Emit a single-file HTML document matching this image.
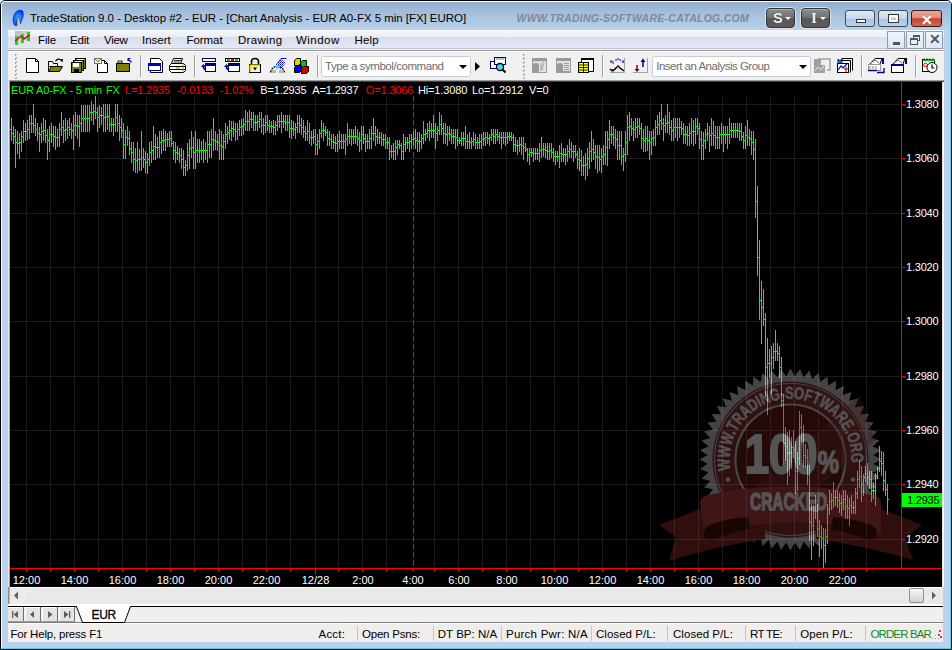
<!DOCTYPE html>
<html><head><meta charset="utf-8">
<style>
*{margin:0;padding:0;box-sizing:border-box}
html,body{width:952px;height:650px;overflow:hidden;background:#fff}
body{font-family:"Liberation Sans",sans-serif;position:relative}
.a{position:absolute}
#win{position:absolute;left:0;top:0;width:952px;height:650px;background:#bad2ea;border:1px solid #000;border-radius:5px 5px 0 0;overflow:hidden}
#inner{position:absolute;left:0;top:0;right:0;bottom:0;border-left:1px solid #fff;border-top:1px solid #fff;border-right:1px solid #4fd3f5;border-bottom:1px solid #4fd3f5;border-radius:4px 4px 0 0;
 background:linear-gradient(#93afcf 0px,#a9c2de 14px,#bad2eb 29px,#bad2eb 100%)}
.title{left:29px;top:10px;font-size:12.5px;color:#1e1e1e;white-space:nowrap;letter-spacing:-0.05px}
.wm{left:516px;top:11px;font-size:11.5px;font-weight:bold;font-style:italic;color:#7d96b2;letter-spacing:0.9px;white-space:nowrap}
.gbtn{top:8px;width:29px;height:20px;border-radius:4px;border:1px solid #333;background:linear-gradient(#8e8e8e,#707070 48%,#585858 52%,#5c5c5c);box-shadow:0 0 0 1px rgba(255,255,255,.55),inset 0 1px 0 rgba(255,255,255,.3)}
.gbtn span{position:absolute;left:6px;top:1px;color:#f4f4f4;font-weight:bold;font-size:14.5px;text-shadow:0 0 1px #222}
.gbtn i{position:absolute;left:18px;top:8px;width:0;height:0;border-left:3px solid transparent;border-right:3px solid transparent;border-top:3px solid #fff}
.cbtn{top:10px;height:17px;border:1px solid #3a4b60;border-radius:3px;background:linear-gradient(#dfe9f5,#c6d7ec 50%,#a9c2df 52%,#bcd2ea)}
.menu{left:8px;top:30px;width:936px;height:18px;background:linear-gradient(#fdfdfe 0px,#f5f6fb 1px,#eceef6 6.5px,#d9deed 7px,#e4e8f3 18px)}
.mi{top:34px;font-size:12.5px;color:#1a1a1a;white-space:nowrap}
.mdi{top:31px;width:18px;height:18px;border:1px solid #8e9bab;background:linear-gradient(#eef4fb,#dce8f5)}
.tb{left:8px;top:50px;width:936px;height:30px;background:#f0f0f0;border-top:1px solid #a0a0a0}
.sep{top:55px;width:2px;height:23px;border-left:1px solid #a8a8a8;border-right:1px solid #fff}
.grip{top:54px;width:3px;height:25px;background:repeating-linear-gradient(#a0a0a0 0 2px,transparent 2px 4px)}
.combo{top:56px;height:21px;background:#fff;border:1px solid #c5cbd3;border-radius:2px}
.combo span{position:absolute;left:4px;top:2px;font-size:12px;color:#6d6d6d;white-space:nowrap}
.combo i{position:absolute;top:8px;width:0;height:0;border-left:4px solid transparent;border-right:4px solid transparent;border-top:4px solid #000}
#chart{left:8px;top:80px;width:936px;height:507px;background:#000;box-shadow:inset 1px 0 0 #e6e9ef,inset 2px 0 0 #a0a0a0,inset 0 1px 0 #9c9c9c,inset 0 2px 0 #404040,inset -1px 0 0 #fff,inset -2px 0 0 #e3e3e3}
.hd{top:84px;font-size:11px;white-space:nowrap;letter-spacing:-0.15px}
.pl{left:906px;font-size:11px;color:#fff;white-space:nowrap;letter-spacing:-0.2px}
.tl{top:574px;font-size:11px;color:#fff;white-space:nowrap}
.sb{left:8px;top:587px;width:935px;height:18px;background:#eaeaea;border-left:2px solid #8a8a8a;border-top:1px solid #fff}
.tabs{left:8px;top:605px;width:935px;height:18px;background:#f0f0f0;border-top:1px solid #000;border-bottom:1px solid #8d8d8d}
.nb{top:607px;width:16px;height:15px;background:#e8e8e8;border-right:1px solid #8a8a8a;border-bottom:1px solid #9a9a9a;border-left:1px solid #fff;border-top:1px solid #fff}
.status{left:8px;top:623px;width:935px;height:19px;background:#f0eded}
.st{top:627px;font-size:12px;color:#1a1a1a;white-space:nowrap}
.ss{top:626px;width:1px;height:15px;background:#c6c2c2}
</style></head><body>
<div id="win"><div id="inner"></div></div>

<!-- title icon -->
<svg class="a" style="left:12px;top:9px" width="14" height="18" viewBox="0 0 14 18">
 <defs><radialGradient id="ti" cx="0.5" cy="0.55" r="0.6"><stop offset="0" stop-color="#60e0ff"/><stop offset="0.45" stop-color="#1a7aff"/><stop offset="1" stop-color="#0020e8"/></radialGradient></defs>
 <path d="M2.6 16.8 C-0.2 13 0 6 4 2.5 C7 -0.2 11.2 0.3 11.6 4 C12 7 10.8 11 8.8 14.8 L7.8 10 C7.4 7.4 5.4 7.4 5 9.6 L4.6 17 Z" fill="url(#ti)"/>
 <path d="M4.6 17 L5 9.6 C5.4 7.4 7.4 7.4 7.8 10 L8.8 14.8" fill="none" stroke="#101830" stroke-width="0.9" opacity="0.8"/>
</svg>
<div class="a gbtn" style="left:766px"><span>S</span><i></i></div>
<div class="a gbtn" style="left:801px"><span style="left:9px;font-family:'Liberation Serif',serif;font-size:15px">I</span><i></i></div>
<div class="a cbtn" style="left:845px;width:30px"><div class="a" style="left:10px;top:8px;width:10px;height:4px;background:#fff;border:1px solid #333"></div></div>
<div class="a cbtn" style="left:878px;width:30px"><div class="a" style="left:10px;top:4px;width:9px;height:7px;background:transparent;border:2px solid #fff;outline:1px solid #333"></div></div>
<div class="a cbtn" style="left:911px;width:31px;border-color:#3c1818;background:linear-gradient(#eba89a,#dd8a76 45%,#c4452d 52%,#d06a50)"><div class="a" style="left:9px;top:1px;font-size:14px;font-weight:bold;color:#fff">&#x2715;</div></div>

<!-- menu -->
<div class="a menu"></div>
<div class="a" style="left:8px;top:48px;width:936px;height:1px;background:#c3c8d7"></div><div class="a" style="left:8px;top:49px;width:936px;height:1px;background:#eeece6"></div>
<svg class="a" style="left:15px;top:31px" width="15" height="14" viewBox="0 0 15 14">
 <defs><linearGradient id="mg" x1="0" y1="0" x2="1" y2="1"><stop offset="0" stop-color="#b8b8b8"/><stop offset="1" stop-color="#f0f0f0"/></linearGradient></defs>
 <rect x="0" y="0" width="15" height="14" fill="url(#mg)"/>
 <rect x="0" y="5" width="3" height="9" fill="#1ed81e"/><rect x="6" y="3" width="3" height="9" fill="#1ed81e"/><rect x="12" y="1" width="3" height="9" fill="#1ed81e"/>
 <path d="M0 10 L6 5 L9 8 L15 4" stroke="#d01010" stroke-width="1.6" fill="none"/>
</svg>
<div class="a mdi" style="left:887px"><div class="a" style="left:5px;top:10px;width:7px;height:3px;background:#555"></div></div>
<div class="a mdi" style="left:906px"><div class="a" style="left:6px;top:3px;width:7px;height:6px;border:1px solid #555;border-top-width:2px"></div><div class="a" style="left:3px;top:6px;width:8px;height:7px;border:1px solid #555;border-top-width:2px;background:#e4eef8"></div></div>
<div class="a mdi" style="left:925px"><div class="a" style="left:3px;top:-1px;font-size:14px;font-weight:bold;color:#555">&#x2715;</div></div>

<!-- toolbar -->
<div class="a tb"></div>
<div class="a" style="left:8px;top:51px;width:936px;height:1px;background:#fff"></div>
<svg class="a" style="left:8px;top:52px" width="935" height="28" viewBox="8 52 935 28">
<defs>
<pattern id="dith" width="2" height="2" patternUnits="userSpaceOnUse"><rect width="2" height="2" fill="#ffff00"/><rect width="1" height="1" fill="#ffffff"/><rect x="1" y="1" width="1" height="1" fill="#ffffff"/></pattern>
<pattern id="grip" width="4" height="4" patternUnits="userSpaceOnUse" x="2" y="1"><rect x="2" y="0" width="1" height="1" fill="#b8b8b8"/><rect x="1" y="1" width="1" height="1" fill="#909090"/><rect x="2" y="1" width="1" height="1" fill="#c0c0c0"/><rect x="1" y="2" width="1" height="1" fill="#b0b0b0"/></pattern>
<pattern id="hatch" width="2" height="2" patternUnits="userSpaceOnUse"><rect width="2" height="2" fill="#f0f0f0"/><rect width="1" height="1" fill="#0000c0"/><rect x="1" y="1" width="1" height="1" fill="#4040e0"/></pattern>
</defs>
<rect x="14" y="54" width="4" height="25" fill="url(#grip)"/>
<rect x="522" y="54" width="4" height="25" fill="url(#grip)"/>
<g shape-rendering="crispEdges">
<!-- separators -->
<path d="M140.5 55V77M194.5 55V77M317.5 55V77M602.5 55V77M861.5 55V77M915.5 55V77" stroke="#a0a0a0"/>
<path d="M141.5 55V77M195.5 55V77M318.5 55V77M603.5 55V77M862.5 55V77M916.5 55V77" stroke="#ffffff"/>
</g>
<!-- new doc -->
<path d="M26.5 58.5H35.5L38.5 61.5V72.5H26.5Z" fill="#fff" stroke="#000"/>
<path d="M35.5 58.5V61.5H38.5" fill="none" stroke="#000"/>
<!-- open folder -->
<path d="M48.5 61.5H52.5L53.5 63.5H57.5V66.5H48.5Z" fill="url(#dith)" stroke="#000"/>
<path d="M48.5 71.5L51.5 66.5H62.5L59.5 71.5Z" fill="#808000" stroke="#000"/>
<path d="M48.5 61.5V71.5" stroke="#000"/>
<path d="M55.5 61Q58.5 57.5 61.5 60.5" fill="none" stroke="#000" stroke-width="1.2"/>
<path d="M60 59.5L62.5 62.5L63 59Z" fill="#000"/>
<!-- save all -->
<rect x="75.5" y="58.5" width="10" height="10" fill="#808000" stroke="#000"/>
<rect x="73.5" y="60.5" width="10" height="10" fill="#808000" stroke="#000"/>
<rect x="71.5" y="62.5" width="10" height="10" fill="#808000" stroke="#000"/>
<rect x="73" y="63" width="6" height="4" fill="#fff"/><rect x="74" y="69" width="5" height="3" fill="#000"/>
<rect x="77" y="59" width="7" height="1" fill="#fff"/><rect x="75" y="61" width="7" height="1" fill="#fff"/>
<!-- mail doc -->
<path d="M97.5 60.5H104.5L107.5 63.5V72.5H97.5Z" fill="#fff" stroke="#000"/>
<path d="M104.5 60.5V63.5H107.5" fill="none" stroke="#000"/>
<rect x="94.5" y="58.5" width="7" height="5" fill="#fff" stroke="#707070"/>
<path d="M95 59L98 62L101 59" fill="#ffff00" stroke="#505050" stroke-width="0.8"/>
<!-- folder up -->
<rect x="116.5" y="63.5" width="13" height="8" fill="#808000" stroke="#000"/>
<rect x="118" y="61" width="4" height="2" fill="#ffff80" stroke="#000" stroke-width="0.8"/>
<path d="M131.5 62.5L128.5 59.5M128 58.5V61M128 58.5H130.5" stroke="#0000c0" stroke-width="1.2" fill="none"/>
<!-- print preview -->
<path d="M150.5 58.5H159.5L162.5 61.5V72.5H150.5Z" fill="#fff" stroke="#000"/>
<rect x="148.5" y="63.5" width="12" height="7" fill="#fff" stroke="#0000a0"/>
<rect x="149" y="64" width="11" height="2" fill="#0000c0"/>
<!-- printer -->
<path d="M173.5 58.5H182.5L180.5 63.5H171.5Z" fill="#fff" stroke="#000"/>
<path d="M174 60.5H181M173.5 62H180" stroke="#000" stroke-width="0.8"/>
<path d="M171.5 63.5H183.5L185.5 65.5V70.5L183.5 72.5H171.5L169.5 70.5V65.5Z" fill="#fff" stroke="#000"/>
<path d="M170 66.5H185M170 69.5H185" stroke="#000"/>
<rect x="176" y="67" width="4" height="2" fill="#e0d000"/>
<path d="M183 64V72" stroke="#777" stroke-width="0.8"/>
<!-- window arrow 1 -->
<rect x="202.5" y="58.5" width="13" height="3" fill="#fff" stroke="#000080"/>
<rect x="205.5" y="63.5" width="10" height="8" fill="#fff" stroke="#000"/>
<rect x="206" y="64" width="10" height="2" fill="#000080"/>
<path d="M206 70Q203 69 203.5 66" fill="none" stroke="#0000a0" stroke-width="1.5"/><path d="M201 67L203.5 64L206 67Z" fill="#0000a0"/>
<!-- window arrow 2 -->
<rect x="225.5" y="58.5" width="14" height="3" fill="#fff" stroke="#000"/>
<rect x="227" y="59" width="3" height="2" fill="#00d000"/><rect x="231" y="59" width="3" height="2" fill="#e00000"/><rect x="235" y="59" width="3" height="2" fill="#00d000"/>
<rect x="228.5" y="63.5" width="11" height="8" fill="#fff" stroke="#000"/>
<rect x="229" y="64" width="11" height="2" fill="#000080"/>
<path d="M229 70Q226 69 226.5 66" fill="none" stroke="#0000a0" stroke-width="1.5"/><path d="M224 67L226.5 64L229 67Z" fill="#0000a0"/>
<!-- lock -->
<path d="M251.5 64.5V61.5Q251.5 58.5 255 58.5Q258.5 58.5 258.5 61.5V64.5" fill="none" stroke="#000" stroke-width="1.6"/>
<rect x="249.5" y="64.5" width="11" height="8" fill="#f0f0f0" stroke="#000"/>
<path d="M250 65.5H260M250.5 65V72" stroke="#f0e000" stroke-width="2"/>
<path d="M253 67.5H257L255 70.5Z" fill="#000"/>
<!-- network/pencil -->
<path d="M276.5 64.5L281 58.5H286.5" stroke="#0000c0" fill="none"/>
<path d="M276 64.5L281 69L285.5 63L281 59Z" fill="url(#hatch)"/>
<path d="M270.5 72.5Q272 66.5 277.5 66.5Q283 66.5 284.5 72.5" fill="none" stroke="#000" stroke-width="1.3" stroke-dasharray="2 1"/>
<circle cx="277.5" cy="67" r="1.8" fill="#20e0ff"/>
<rect x="272" y="70" width="4" height="3" fill="#b8b8b8"/><rect x="279" y="70" width="4" height="3" fill="#b8b8b8"/>
<!-- cubes -->
<path d="M294.5 60.5L296.5 58.5H300.5V63.5L298.5 65.5H294.5Z" fill="#d8d800" stroke="#000"/>
<path d="M300.5 62.5L302.5 60.5H306.5V65.5L304.5 67.5H300.5Z" fill="#00c800" stroke="#000"/>
<path d="M294.5 67.5L296.5 65.5H301.5V70.5L299.5 72.5H294.5Z" fill="#0000d8" stroke="#000"/>
<path d="M301.5 68.5L303.5 66.5H308.5V71.5L306.5 73.5H301.5Z" fill="#d00000" stroke="#000"/>
<!-- combo 1 -->
<rect x="321.5" y="56.5" width="149" height="20" rx="2" fill="#fff" stroke="#c9ced6"/>
<path d="M459 65H467L463 69Z" fill="#000"/>
<path d="M475 62V71L480 66.5Z" fill="#000"/>
<!-- globe search -->
<rect x="490.5" y="61.5" width="8" height="7" fill="#fff" stroke="#000080"/>
<rect x="494.5" y="57.5" width="11" height="7" fill="#fff" stroke="#000080"/>
<path d="M496 59H504" stroke="#808080"/>
<circle cx="500" cy="67" r="3.5" fill="#40e0f0" stroke="#000" stroke-width="1.3"/>
<path d="M502.5 69.5L505.5 72.5" stroke="#000" stroke-width="2"/>
<!-- gray icon1 -->
<rect x="532" y="58" width="15" height="15" fill="#9a9a9a"/>
<rect x="533" y="61" width="13" height="11" fill="#e4e4e4"/>
<path d="M533 61H546" stroke="#9a9a9a" stroke-dasharray="1 1"/>
<path d="M533 65Q533 63 536 63Q539 63 539 65V72H533Z" fill="#9a9a9a"/>
<path d="M541 63V71M543 62Q545 63 543 66Q541 68 543 70" stroke="#9a9a9a" fill="none"/>
<!-- gray icon2 -->
<rect x="556" y="58" width="15" height="15" fill="#9a9a9a"/>
<rect x="557" y="61" width="13" height="10" fill="#e4e4e4"/>
<path d="M557 65Q557 63 560 63Q563 63 563 65V72H557Z" fill="#9a9a9a"/>
<path d="M564 63.5H569M564 65.5H569M564 67.5H569M564 69.5H569" stroke="#9a9a9a"/>
<!-- yellow table -->
<rect x="581.5" y="58.5" width="12" height="13" fill="#fff" stroke="#000"/>
<rect x="581" y="58" width="13" height="2" fill="#000"/>
<rect x="578.5" y="62.5" width="10" height="10" fill="#ffff00" stroke="#000"/>
<path d="M579 65H588M579 67.5H588M579 70H588M583.5 63V72" stroke="#000" stroke-width="0.8"/>
<!-- wave -->
<path d="M611 60V62M613 61V64M616 59V61M618 58V60M620 59V61M623 60V63" stroke="#0000e0" stroke-width="1"/>
<path d="M611 61V63M623 61V63" stroke="#a00000"/>
<path d="M610 69Q613 72 616 68Q618 65 620 68L624 71" fill="none" stroke="#000" stroke-width="1.5"/>
<path d="M617 66H619" stroke="#e00000" stroke-width="1.5"/><path d="M611 72H614" stroke="#0000e0"/>
<path d="M624.5 58V72.5H610" fill="none" stroke="#a0a0a0"/>
<!-- arrows -->
<path d="M637 65V70" stroke="#800000" stroke-width="1.5"/><path d="M634.5 69H639.5L637 72Z" fill="#800000"/>
<path d="M643 61V67" stroke="#000080" stroke-width="1.5"/><path d="M640.5 62H645.5L643 58.5Z" fill="#000080"/>
<path d="M647.5 58V72.5H633" fill="none" stroke="#a0a0a0"/>
<!-- combo 2 -->
<rect x="652.5" y="56.5" width="158" height="20" rx="2" fill="#fff" stroke="#c9ced6"/>
<path d="M799 65H807L803 69Z" fill="#000"/>
<!-- gray icon3 -->
<rect x="814" y="59" width="7" height="6" fill="#a0a0a0"/>
<path d="M818 59H830V70H827" fill="none" stroke="#a0a0a0" stroke-width="1.5"/>
<rect x="814" y="65" width="11" height="8" fill="#a0a0a0"/>
<path d="M815 71L818 67L821 70L824 66" stroke="#e8e8e8" fill="none"/>
<!-- M icon -->
<path d="M841.5 58.5H852.5V70.5" fill="none" stroke="#000"/><path d="M839.5 60.5H850.5V72.5" fill="none" stroke="#000"/>
<rect x="837.5" y="63.5" width="11" height="9" fill="#fff" stroke="#000"/>
<text x="837" y="63.5" font-family="Liberation Sans" font-weight="bold" font-size="7" fill="#000080">M</text>
<path d="M838 70L841 66L843 68L847 64" stroke="#0000e0" fill="none" stroke-width="1.2"/>
<path d="M844 69H848M846 67V72" stroke="#c00000"/>
<!-- icon 868 -->
<path d="M870 64L875 58.5H882L880 64" fill="#fff" stroke="#000" stroke-width="1"/>
<path d="M871 63L875 60L879 63" fill="none" stroke="#666" stroke-width="1"/>
<rect x="868.5" y="64.5" width="12" height="6" fill="#fff" stroke="#999"/>
<path d="M870 66V69M873 66V69M876 66V69" stroke="#888"/>
<path d="M883 58V64" stroke="#000080" stroke-width="2"/>
<path d="M868 70.5H877M877 72.5H884V68" stroke="#000080" stroke-width="1.3" fill="none"/>
<!-- icon 891 -->
<path d="M893 64L898 58.5H905L903 64" fill="#fff" stroke="#000"/>
<path d="M894 63L898 60L902 63" fill="none" stroke="#666"/>
<rect x="891.5" y="64.5" width="12" height="8" fill="#fff" stroke="#000"/>
<rect x="892" y="64" width="12" height="2" fill="#000080"/>
<path d="M906 58V64" stroke="#000080" stroke-width="2"/>
<!-- calendar -->
<rect x="922.5" y="59.5" width="12" height="12" fill="#fff" stroke="#000"/>
<rect x="923" y="59" width="12" height="2" fill="#00c000"/>
<path d="M924 58.5V60M927 58.5V60M930 58.5V60M933 58.5V60" stroke="#000"/>
<circle cx="925.5" cy="65" r="1.8" fill="none" stroke="#e00000"/>
<circle cx="932" cy="67.5" r="5" fill="#fff" stroke="#000"/>
<path d="M932 64.5V68H934.5" fill="none" stroke="#000" stroke-width="1.2"/>
</svg>


<!-- chart -->
<div class="a" id="chart"></div>
<svg class="a" style="left:10px;top:82px" width="932" height="505" viewBox="10 82 932 505" shape-rendering="crispEdges">
<path d="M10 104.5H900M10 158.5H900M10 213.5H900M10 267.5H900M10 321.5H900M10 376.5H900M10 430.5H900M10 484.5H900M10 539.5H900M26.5 96V567M50.5 96V567M74.5 96V567M98.5 96V567M122.5 96V567M146.5 96V567M170.5 96V567M194.5 96V567M218.5 96V567M242.5 96V567M266.5 96V567M290.5 96V567M315.5 96V567M338.5 96V567M362.5 96V567M386.5 96V567M434.5 96V567M458.5 96V567M482.5 96V567M506.5 96V567M530.5 96V567M554.5 96V567M578.5 96V567M602.5 96V567M626.5 96V567M650.5 96V567M674.5 96V567M698.5 96V567M722.5 96V567M746.5 96V567M770.5 96V567M794.5 96V567M818.5 96V567M842.5 96V567M866.5 96V567" stroke="#1b1b1b" stroke-width="1" fill="none"/>
<path d="M413.5 96V567" stroke="#4a4a4a" stroke-width="1" stroke-dasharray="6 2" fill="none"/>
<path d="M11.5 118V141M10 129.5h1M12 133.5h1M13.5 126V144M12 133.5h1M14 136.5h1M15.5 129V168M14 136.5h1M16 142.5h1M17.5 131V154M16 142.5h1M18 143.5h1M19.5 133V159M18 143.5h1M20 142.5h1M21.5 131V152M20 142.5h1M22 136.5h1M23.5 120V143M22 136.5h1M24 131.5h1M25.5 123V141M24 131.5h1M26 131.5h1M27.5 120V140M26 131.5h1M28 129.5h1M29.5 115V139M28 129.5h1M30 123.5h1M31.5 115V133M30 123.5h1M32 123.5h1M33.5 104V133M32 123.5h1M34 125.5h1M35.5 118V136M34 125.5h1M36 129.5h1M37.5 123V141M36 129.5h1M38 133.5h1M39.5 127V152M38 133.5h1M40 134.5h1M41.5 123V143M40 134.5h1M42 131.5h1M43.5 118V141M42 131.5h1M44 130.5h1M45.5 120V143M44 130.5h1M46 135.5h1M47.5 129V160M46 135.5h1M48 140.5h1M49.5 126V152M48 140.5h1M50 134.5h1M51.5 123V143M50 134.5h1M52 134.5h1M53.5 126V147M52 134.5h1M54 136.5h1M55.5 126V150M54 136.5h1M56 137.5h1M57.5 129V147M56 137.5h1M58 137.5h1M59.5 123V147M58 137.5h1M60 129.5h1M61.5 112V136M60 129.5h1M62 127.5h1M63.5 120V143M62 127.5h1M64 130.5h1M65.5 118V141M64 130.5h1M66 129.5h1M67.5 120V139M66 129.5h1M68 127.5h1M69.5 118V136M68 127.5h1M70 129.5h1M71.5 123V139M70 129.5h1M72 130.5h1M73.5 115V150M72 130.5h1M74 125.5h1M75.5 112V136M74 125.5h1M76 125.5h1M77.5 115V139M76 125.5h1M78 126.5h1M79.5 115V147M78 126.5h1M80 123.5h1M81.5 105V132M80 123.5h1M82 118.5h1M83.5 105V132M82 118.5h1M84 118.5h1M85.5 105V132M84 118.5h1M86 118.5h1M87.5 105V132M86 118.5h1M88 118.5h1M89.5 105V132M88 118.5h1M90 112.5h1M91.5 101V121M90 112.5h1M92 112.5h1M93.5 104V125M92 112.5h1M94 111.5h1M95.5 96V119M94 111.5h1M96 112.5h1M97.5 107V132M96 112.5h1M98 117.5h1M99.5 105V128M98 117.5h1M100 115.5h1M101.5 107V125M100 115.5h1M102 115.5h1M103.5 104V132M102 115.5h1M104 117.5h1M105.5 104V132M104 117.5h1M106 116.5h1M107.5 104V130M106 116.5h1M108 116.5h1M109.5 104V132M108 116.5h1M110 124.5h1M111.5 118V132M110 124.5h1M112 124.5h1M113.5 118V136M112 124.5h1M114 124.5h1M115.5 104V132M114 124.5h1M116 117.5h1M117.5 104V132M116 117.5h1M118 123.5h1M119.5 115V141M118 123.5h1M120 127.5h1M121.5 118V138M120 127.5h1M122 130.5h1M123.5 123V159M122 130.5h1M124 144.5h1M125.5 130V159M124 144.5h1M126 137.5h1M127.5 126V146M126 137.5h1M128 138.5h1M129.5 131V155M128 138.5h1M130 148.5h1M131.5 142V163M130 148.5h1M132 152.5h1M133.5 142V171M132 152.5h1M134 159.5h1M135.5 148V173M134 159.5h1M136 160.5h1M137.5 142V173M136 160.5h1M138 159.5h1M139.5 149V171M138 159.5h1M140 159.5h1M141.5 131V171M140 159.5h1M142 157.5h1M143.5 148V168M142 157.5h1M144 159.5h1M145.5 151V173M144 159.5h1M146 162.5h1M147.5 153V174M146 162.5h1M148 159.5h1M149.5 142V166M148 159.5h1M150 152.5h1M151.5 141V163M150 152.5h1M152 150.5h1M153.5 126V160M152 150.5h1M154 146.5h1M155.5 134V160M154 146.5h1M156 147.5h1M157.5 137V158M156 147.5h1M158 147.5h1M159.5 131V158M158 147.5h1M160 142.5h1M161.5 131V154M160 142.5h1M162 140.5h1M163.5 129V151M162 140.5h1M164 140.5h1M165.5 131V151M164 140.5h1M166 139.5h1M167.5 133V147M166 139.5h1M168 139.5h1M169.5 131V147M168 139.5h1M170 138.5h1M171.5 131V147M170 138.5h1M172 143.5h1M173.5 141V160M172 143.5h1M174 150.5h1M175.5 142V163M174 150.5h1M176 152.5h1M177.5 146V160M176 152.5h1M178 153.5h1M179.5 148V163M178 153.5h1M180 155.5h1M181.5 148V169M180 155.5h1M182 159.5h1M183.5 150V176M182 159.5h1M184 167.5h1M185.5 160V176M184 167.5h1M186 165.5h1M187.5 143V171M186 165.5h1M188 155.5h1M189.5 139V169M188 155.5h1M190 148.5h1M191.5 131V158M190 148.5h1M192 147.5h1M193.5 137V169M192 147.5h1M194 152.5h1M195.5 131V169M194 152.5h1M196 150.5h1M197.5 139V163M196 150.5h1M198 150.5h1M199.5 139V163M198 150.5h1M200 150.5h1M201.5 141V160M200 150.5h1M202 150.5h1M203.5 139V163M202 150.5h1M204 150.5h1M205.5 142V160M204 150.5h1M206 150.5h1M207.5 131V163M206 150.5h1M208 144.5h1M209.5 131V158M208 144.5h1M210 144.5h1M211.5 129V158M210 144.5h1M212 139.5h1M213.5 118V151M212 139.5h1M214 140.5h1M215.5 131V150M214 140.5h1M216 141.5h1M217.5 134V151M216 141.5h1M218 142.5h1M219.5 129V160M218 142.5h1M220 145.5h1M221.5 131V160M220 145.5h1M222 146.5h1M223.5 134V160M222 146.5h1M224 141.5h1M225.5 123V149M224 141.5h1M226 134.5h1M227.5 126V144M226 134.5h1M228 132.5h1M229.5 120V140M228 132.5h1M230 130.5h1M231.5 121V141M230 130.5h1M232 128.5h1M233.5 121V137M232 128.5h1M234 129.5h1M235.5 123V141M234 129.5h1M236 131.5h1M237.5 123V140M236 131.5h1M238 129.5h1M239.5 120V136M238 129.5h1M240 127.5h1M241.5 119V136M240 127.5h1M242 126.5h1M243.5 118V135M242 126.5h1M244 124.5h1M245.5 110V131M244 124.5h1M246 121.5h1M247.5 112V131M246 121.5h1M248 121.5h1M249.5 110V131M248 121.5h1M250 119.5h1M251.5 112V128M250 119.5h1M252 119.5h1M253.5 112V131M252 119.5h1M254 122.5h1M255.5 115V131M254 122.5h1M256 122.5h1M257.5 115V131M256 122.5h1M258 121.5h1M259.5 112V128M258 121.5h1M260 119.5h1M261.5 112V133M260 119.5h1M262 125.5h1M263.5 118V135M262 125.5h1M264 125.5h1M265.5 115V133M264 125.5h1M266 122.5h1M267.5 115V131M266 122.5h1M268 125.5h1M269.5 120V133M268 125.5h1M270 126.5h1M271.5 121V133M270 126.5h1M272 126.5h1M273.5 120V135M272 126.5h1M274 127.5h1M275.5 121V135M274 127.5h1M276 125.5h1M277.5 115V131M276 125.5h1M278 121.5h1M279.5 115V128M278 121.5h1M280 121.5h1M281.5 112V133M280 121.5h1M282 121.5h1M283.5 115V128M282 121.5h1M284 121.5h1M285.5 115V131M284 121.5h1M286 122.5h1M287.5 115V131M286 122.5h1M288 122.5h1M289.5 115V138M288 122.5h1M290 128.5h1M291.5 120V139M290 128.5h1M292 128.5h1M293.5 121V136M292 128.5h1M294 129.5h1M295.5 123V139M294 129.5h1M296 127.5h1M297.5 115V133M296 127.5h1M298 123.5h1M299.5 115V133M298 123.5h1M300 125.5h1M301.5 118V135M300 125.5h1M302 127.5h1M303.5 120V138M302 127.5h1M304 131.5h1M305.5 126V141M304 131.5h1M306 133.5h1M307.5 120V141M306 133.5h1M308 131.5h1M309.5 123V144M308 131.5h1M310 137.5h1M311.5 131V146M310 137.5h1M312 137.5h1M313.5 129V144M312 137.5h1M314 136.5h1M315.5 129V155M314 136.5h1M316 144.5h1M317.5 134V155M316 144.5h1M318 141.5h1M319.5 129V149M318 141.5h1M320 133.5h1M321.5 120V138M320 133.5h1M322 130.5h1M323.5 123V141M322 130.5h1M324 130.5h1M325.5 126V136M324 130.5h1M326 132.5h1M327.5 129V146M326 132.5h1M328 138.5h1M329.5 131V146M328 138.5h1M330 139.5h1M331.5 134V149M330 139.5h1M332 141.5h1M333.5 134V149M332 141.5h1M334 142.5h1M335.5 136V152M334 142.5h1M336 143.5h1M337.5 134V152M336 143.5h1M338 141.5h1M339.5 131V149M338 141.5h1M340 141.5h1M341.5 134V149M340 141.5h1M342 141.5h1M343.5 134V149M342 141.5h1M344 141.5h1M345.5 134V155M344 141.5h1M346 139.5h1M347.5 123V146M346 139.5h1M348 136.5h1M349.5 129V144M348 136.5h1M350 136.5h1M351.5 129V146M350 136.5h1M352 136.5h1M353.5 129V144M352 136.5h1M354 136.5h1M355.5 126V144M354 136.5h1M356 136.5h1M357.5 129V146M356 136.5h1M358 138.5h1M359.5 132V152M358 138.5h1M360 140.5h1M361.5 126V150M360 140.5h1M362 134.5h1M363.5 126V144M362 134.5h1M364 138.5h1M365.5 134V152M364 138.5h1M366 141.5h1M367.5 134V149M366 141.5h1M368 141.5h1M369.5 129V149M368 141.5h1M370 138.5h1M371.5 126V149M370 138.5h1M372 133.5h1M373.5 118V141M372 133.5h1M374 133.5h1M375.5 126V146M374 133.5h1M376 136.5h1M377.5 129V144M376 136.5h1M378 137.5h1M379.5 132V144M378 137.5h1M380 137.5h1M381.5 132V146M380 137.5h1M382 139.5h1M383.5 134V146M382 139.5h1M384 139.5h1M385.5 134V149M384 139.5h1M386 142.5h1M387.5 137V149M386 142.5h1M388 142.5h1M389.5 137V160M388 142.5h1M390 151.5h1M391.5 145V158M390 151.5h1M392 151.5h1M393.5 143V160M392 151.5h1M394 151.5h1M395.5 140V160M394 151.5h1M396 147.5h1M397.5 140V155M396 147.5h1M398 144.5h1M399.5 140V149M398 144.5h1M400 145.5h1M401.5 143V160M400 145.5h1M402 151.5h1M403.5 134V160M402 151.5h1M404 144.5h1M405.5 137V152M404 144.5h1M406 142.5h1M407.5 137V149M406 142.5h1M408 142.5h1M409.5 134V152M408 142.5h1M410 141.5h1M411.5 134V149M410 141.5h1M412 139.5h1M413.5 131V146M412 139.5h1M414 138.5h1M415.5 129V149M414 138.5h1M416 140.5h1M417.5 132V152M416 140.5h1M418 141.5h1M419.5 132V152M418 141.5h1M420 141.5h1M421.5 134V149M420 141.5h1M422 138.5h1M423.5 121V144M422 138.5h1M424 134.5h1M425.5 129V141M424 134.5h1M426 133.5h1M427.5 123V138M426 133.5h1M428 130.5h1M429.5 121V141M428 130.5h1M430 130.5h1M431.5 123V138M430 130.5h1M432 130.5h1M433.5 115V138M432 130.5h1M434 130.5h1M435.5 123V149M434 130.5h1M436 133.5h1M437.5 126V141M436 133.5h1M438 130.5h1M439.5 112V135M438 130.5h1M440 124.5h1M441.5 115V135M440 124.5h1M442 128.5h1M443.5 123V144M442 128.5h1M444 133.5h1M445.5 123V144M444 133.5h1M446 134.5h1M447.5 126V146M446 134.5h1M448 133.5h1M449.5 126V141M448 133.5h1M450 134.5h1M451.5 129V144M450 134.5h1M452 136.5h1M453.5 129V144M452 136.5h1M454 136.5h1M455.5 129V149M454 136.5h1M456 137.5h1M457.5 129V146M456 137.5h1M458 140.5h1M459.5 137V144M458 140.5h1M460 140.5h1M461.5 132V146M460 140.5h1M462 138.5h1M463.5 132V146M462 138.5h1M464 138.5h1M465.5 126V149M464 138.5h1M466 141.5h1M467.5 134V149M466 141.5h1M468 141.5h1M469.5 132V149M468 141.5h1M470 142.5h1M471.5 137V149M470 142.5h1M472 141.5h1M473.5 132V146M472 141.5h1M474 139.5h1M475.5 134V149M474 139.5h1M476 142.5h1M477.5 137V149M476 142.5h1M478 142.5h1M479.5 134V149M478 142.5h1M480 141.5h1M481.5 134V149M480 141.5h1M482 139.5h1M483.5 132V146M482 139.5h1M484 138.5h1M485.5 132V146M484 138.5h1M486 137.5h1M487.5 132V144M486 137.5h1M488 138.5h1M489.5 134V146M488 138.5h1M490 137.5h1M491.5 129V141M490 137.5h1M492 134.5h1M493.5 129V144M492 134.5h1M494 136.5h1M495.5 129V144M494 136.5h1M496 134.5h1M497.5 129V141M496 134.5h1M498 136.5h1M499.5 132V144M498 136.5h1M500 137.5h1M501.5 132V149M500 137.5h1M502 137.5h1M503.5 132V144M502 137.5h1M504 137.5h1M505.5 132V146M504 137.5h1M506 137.5h1M507.5 132V144M506 137.5h1M508 136.5h1M509.5 132V141M508 136.5h1M510 136.5h1M511.5 132V141M510 136.5h1M512 137.5h1M513.5 134V152M512 137.5h1M514 144.5h1M515.5 137V152M514 144.5h1M516 145.5h1M517.5 140V155M516 145.5h1M518 145.5h1M519.5 137V152M518 145.5h1M520 144.5h1M521.5 137V155M520 144.5h1M522 145.5h1M523.5 137V160M522 145.5h1M524 147.5h1M525.5 143V152M524 147.5h1M526 149.5h1M527.5 148V162M526 149.5h1M528 154.5h1M529.5 148V165M528 154.5h1M530 152.5h1M531.5 148V157M530 152.5h1M532 152.5h1M533.5 148V162M532 152.5h1M534 153.5h1M535.5 148V160M534 153.5h1M536 153.5h1M537.5 148V160M536 153.5h1M538 153.5h1M539.5 143V162M538 153.5h1M540 150.5h1M541.5 137V158M540 150.5h1M542 149.5h1M543.5 143V157M542 149.5h1M544 149.5h1M545.5 143V158M544 149.5h1M546 150.5h1M547.5 143V160M546 150.5h1M548 151.5h1M549.5 143V160M548 151.5h1M550 150.5h1M551.5 143V158M550 150.5h1M552 152.5h1M553.5 148V162M552 152.5h1M554 156.5h1M555.5 151V165M554 156.5h1M556 156.5h1M557.5 151V162M556 156.5h1M558 156.5h1M559.5 145V168M558 156.5h1M560 153.5h1M561.5 143V162M560 153.5h1M562 154.5h1M563.5 148V162M562 154.5h1M564 154.5h1M565.5 148V165M564 154.5h1M566 154.5h1M567.5 145V162M566 154.5h1M568 151.5h1M569.5 139V158M568 151.5h1M570 149.5h1M571.5 142V158M570 149.5h1M572 151.5h1M573.5 145V162M572 151.5h1M574 151.5h1M575.5 145V158M574 151.5h1M576 154.5h1M577.5 151V169M576 154.5h1M578 159.5h1M579.5 148V171M578 159.5h1M580 160.5h1M581.5 150V176M580 160.5h1M582 165.5h1M583.5 156V176M582 165.5h1M584 165.5h1M585.5 153V180M584 165.5h1M586 164.5h1M587.5 148V176M586 164.5h1M588 158.5h1M589.5 142V169M588 158.5h1M590 151.5h1M591.5 131V162M590 151.5h1M592 149.5h1M593.5 139V160M592 149.5h1M594 152.5h1M595.5 145V169M594 152.5h1M596 156.5h1M597.5 145V173M596 156.5h1M598 157.5h1M599.5 145V171M598 157.5h1M600 159.5h1M601.5 148V173M600 159.5h1M602 156.5h1M603.5 145V165M602 156.5h1M604 154.5h1M605.5 131V165M604 154.5h1M606 147.5h1M607.5 131V166M606 147.5h1M608 139.5h1M609.5 120V149M608 139.5h1M610 134.5h1M611.5 126V144M610 134.5h1M612 134.5h1M613.5 126V146M612 134.5h1M614 137.5h1M615.5 129V149M614 137.5h1M616 139.5h1M617.5 131V160M616 139.5h1M618 145.5h1M619.5 131V160M618 145.5h1M620 145.5h1M621.5 131V165M620 145.5h1M622 156.5h1M623.5 148V171M622 156.5h1M624 154.5h1M625.5 131V162M624 154.5h1M626 142.5h1M627.5 115V155M626 142.5h1M628 127.5h1M629.5 112V141M628 127.5h1M630 126.5h1M631.5 118V136M630 126.5h1M632 128.5h1M633.5 121V141M632 128.5h1M634 129.5h1M635.5 118V138M634 129.5h1M636 127.5h1M637.5 118V138M636 127.5h1M638 126.5h1M639.5 118V135M638 126.5h1M640 128.5h1M641.5 123V149M640 128.5h1M642 138.5h1M643.5 129V152M642 138.5h1M644 140.5h1M645.5 126V152M644 140.5h1M646 138.5h1M647.5 126V151M646 138.5h1M648 140.5h1M649.5 131V160M648 140.5h1M650 142.5h1M651.5 131V155M650 142.5h1M652 138.5h1M653.5 129V146M652 138.5h1M654 137.5h1M655.5 120V146M654 137.5h1M656 127.5h1M657.5 115V135M656 127.5h1M658 124.5h1M659.5 112V135M658 124.5h1M660 120.5h1M661.5 104V130M660 120.5h1M662 123.5h1M663.5 118V141M662 123.5h1M664 125.5h1M665.5 115V133M664 125.5h1M666 123.5h1M667.5 104V133M666 123.5h1M668 122.5h1M669.5 112V135M668 122.5h1M670 127.5h1M671.5 120V141M670 127.5h1M672 130.5h1M673.5 118V141M672 130.5h1M674 127.5h1M675.5 118V138M674 127.5h1M676 127.5h1M677.5 118V141M676 127.5h1M678 127.5h1M679.5 118V138M678 127.5h1M680 127.5h1M681.5 121V135M680 127.5h1M682 128.5h1M683.5 123V144M682 128.5h1M684 134.5h1M685.5 126V144M684 134.5h1M686 134.5h1M687.5 126V146M686 134.5h1M688 135.5h1M689.5 123V146M688 135.5h1M690 133.5h1M691.5 118V144M690 133.5h1M692 131.5h1M693.5 120V146M692 131.5h1M694 131.5h1M695.5 118V144M694 131.5h1M696 126.5h1M697.5 118V135M696 126.5h1M698 128.5h1M699.5 123V149M698 128.5h1M700 139.5h1M701.5 131V160M700 139.5h1M702 145.5h1M703.5 132V160M702 145.5h1M704 140.5h1M705.5 129V149M704 140.5h1M706 134.5h1M707.5 123V141M706 134.5h1M708 133.5h1M709.5 126V152M708 133.5h1M710 135.5h1M711.5 118V146M710 135.5h1M712 133.5h1M713.5 121V146M712 133.5h1M714 135.5h1M715.5 126V149M714 135.5h1M716 137.5h1M717.5 126V149M716 137.5h1M718 137.5h1M719.5 126V149M718 137.5h1M720 134.5h1M721.5 123V144M720 134.5h1M722 134.5h1M723.5 126V152M722 134.5h1M724 134.5h1M725.5 126V144M724 134.5h1M726 134.5h1M727.5 126V149M726 134.5h1M728 134.5h1M729.5 118V144M728 134.5h1M730 130.5h1M731.5 123V138M730 130.5h1M732 130.5h1M733.5 123V138M732 130.5h1M734 130.5h1M735.5 123V138M734 130.5h1M736 130.5h1M737.5 123V138M736 130.5h1M738 130.5h1M739.5 123V141M738 130.5h1M740 131.5h1M741.5 123V141M740 131.5h1M742 136.5h1M743.5 132V149M742 136.5h1M744 140.5h1M745.5 126V149M744 140.5h1M746 135.5h1M747.5 120V146M746 135.5h1M748 137.5h1M749.5 129V146M748 137.5h1M750 138.5h1M751.5 131V155M750 138.5h1M752 142.5h1M753.5 131V160M752 142.5h1M754 149.5h1M755.5 139V218M754 149.5h1M756 201.5h1M757.5 186V276M756 201.5h1M758 257.5h1M759.5 240V320M758 257.5h1M760 300.5h1M761.5 281V344M760 300.5h1M762 307.5h1M763.5 289V326M762 307.5h1M764 319.5h1M765.5 313V397M764 319.5h1M766 367.5h1M767.5 338V415M766 367.5h1M768 363.5h1M769.5 349V378M768 363.5h1M770 363.5h1M771.5 346V394M770 363.5h1M772 357.5h1M773.5 343V369M772 357.5h1M774 351.5h1M775.5 330V361M774 351.5h1M776 351.5h1M777.5 343V361M776 351.5h1M778 353.5h1M779.5 346V378M778 353.5h1M780 367.5h1M781.5 357V407M780 367.5h1M782 400.5h1M783.5 395V465M782 400.5h1M784 443.5h1M785.5 427V461M784 443.5h1M786 446.5h1M787.5 432V485M786 446.5h1M788 453.5h1M789.5 430V476M788 453.5h1M790 452.5h1M791.5 437V469M790 452.5h1M792 447.5h1M793.5 430V458M792 447.5h1M794 449.5h1M795.5 441V494M794 449.5h1M796 471.5h1M797.5 452V491M796 471.5h1M798 458.5h1M799.5 411V465M798 458.5h1M800 427.5h1M801.5 414V442M800 427.5h1M802 433.5h1M803.5 425V467M802 433.5h1M804 455.5h1M805.5 444V467M804 455.5h1M806 457.5h1M807.5 449V485M806 457.5h1M808 474.5h1M809.5 465V541M808 474.5h1M810 522.5h1M811.5 504V560M810 522.5h1M812 525.5h1M813.5 505V546M812 525.5h1M814 511.5h1M815.5 495V519M814 511.5h1M816 511.5h1M817.5 504V537M816 511.5h1M818 528.5h1M819.5 520V557M818 528.5h1M820 536.5h1M821.5 525V549M820 536.5h1M822 538.5h1M823.5 528V568M822 538.5h1M824 545.5h1M825.5 529V563M824 545.5h1M826 536.5h1M827.5 504V544M826 536.5h1M828 509.5h1M829.5 490V515M828 509.5h1M830 501.5h1M831.5 493V510M830 501.5h1M832 500.5h1M833.5 482V508M832 500.5h1M834 497.5h1M835.5 490V506M834 497.5h1M836 497.5h1M837.5 490V508M836 497.5h1M838 500.5h1M839.5 493V513M838 500.5h1M840 503.5h1M841.5 495V516M840 503.5h1M842 502.5h1M843.5 490V510M842 502.5h1M844 499.5h1M845.5 490V519M844 499.5h1M846 506.5h1M847.5 495V519M846 506.5h1M848 508.5h1M849.5 498V526M848 508.5h1M850 505.5h1M851.5 495V514M850 505.5h1M852 507.5h1M853.5 501V514M852 507.5h1M854 507.5h1M855.5 488V514M854 507.5h1M856 493.5h1M857.5 471V499M856 493.5h1M858 479.5h1M859.5 460V488M858 479.5h1M860 476.5h1M861.5 466V502M860 476.5h1M862 484.5h1M863.5 474V496M862 484.5h1M864 477.5h1M865.5 466V482M864 477.5h1M866 473.5h1M867.5 463V485M866 473.5h1M868 477.5h1M869.5 471V489M868 477.5h1M870 479.5h1M871.5 471V502M870 479.5h1M872 490.5h1M873.5 482V499M872 490.5h1M874 490.5h1M875.5 473V506M874 490.5h1M876 475.5h1M877.5 466V479M876 475.5h1M878 468.5h1M879.5 446V472M878 468.5h1M880 461.5h1M881.5 451V476M880 461.5h1M882 463.5h1M883.5 452V491M882 463.5h1M884 480.5h1M885.5 471V496M884 480.5h1M886 489.5h1M887.5 484V515M886 489.5h1M888 499.5h1" stroke="#00ff00" stroke-width="1" fill="none"/>
<path d="M901.5 82V568M10 568.5H942" stroke="#ff0000" stroke-width="1" fill="none"/>
<path d="M902 104.5h3M902 158.5h3M902 213.5h3M902 267.5h3M902 321.5h3M902 376.5h3M902 430.5h3M902 484.5h3M902 539.5h3M26.5 569v2M50.5 569v2M74.5 569v2M98.5 569v2M122.5 569v2M146.5 569v2M170.5 569v2M194.5 569v2M218.5 569v2M242.5 569v2M266.5 569v2M290.5 569v2M315.5 569v6M338.5 569v2M362.5 569v2M386.5 569v2M412.5 569v2M434.5 569v2M458.5 569v2M482.5 569v2M506.5 569v2M530.5 569v2M554.5 569v2M578.5 569v2M602.5 569v2M626.5 569v2M650.5 569v2M674.5 569v2M698.5 569v2M722.5 569v2M746.5 569v2M770.5 569v2M794.5 569v2M818.5 569v2M842.5 569v2M866.5 569v2" stroke="#ff0000" stroke-width="1" fill="none"/>
<rect x="902" y="493" width="40" height="14" fill="#00ff00"/>
</svg>
<div class="a pl" style="top:98px">1.3080</div>
<div class="a pl" style="top:152px">1.3060</div>
<div class="a pl" style="top:207px">1.3040</div>
<div class="a pl" style="top:261px">1.3020</div>
<div class="a pl" style="top:315px">1.3000</div>
<div class="a pl" style="top:370px">1.2980</div>
<div class="a pl" style="top:424px">1.2960</div>
<div class="a pl" style="top:478px">1.2940</div>
<div class="a pl" style="top:533px">1.2920</div>
<div class="a pl" style="top:494px;left:907px;color:#000">1.2935</div>
<div class="a tl" style="left:-13.5px;width:80px;text-align:center">12:00</div>
<div class="a tl" style="left:34.5px;width:80px;text-align:center">14:00</div>
<div class="a tl" style="left:82.5px;width:80px;text-align:center">16:00</div>
<div class="a tl" style="left:130.5px;width:80px;text-align:center">18:00</div>
<div class="a tl" style="left:178.5px;width:80px;text-align:center">20:00</div>
<div class="a tl" style="left:226.5px;width:80px;text-align:center">22:00</div>
<div class="a tl" style="left:275.5px;width:80px;text-align:center">12/28</div>
<div class="a tl" style="left:323px;width:80px;text-align:center">2:00</div>
<div class="a tl" style="left:373px;width:80px;text-align:center">4:00</div>
<div class="a tl" style="left:419px;width:80px;text-align:center">6:00</div>
<div class="a tl" style="left:467px;width:80px;text-align:center">8:00</div>
<div class="a tl" style="left:514.5px;width:80px;text-align:center">10:00</div>
<div class="a tl" style="left:562.5px;width:80px;text-align:center">12:00</div>
<div class="a tl" style="left:610.5px;width:80px;text-align:center">14:00</div>
<div class="a tl" style="left:658.5px;width:80px;text-align:center">16:00</div>
<div class="a tl" style="left:706.5px;width:80px;text-align:center">18:00</div>
<div class="a tl" style="left:754.5px;width:80px;text-align:center">20:00</div>
<div class="a tl" style="left:802.5px;width:80px;text-align:center">22:00</div>
<div class="a hd" style="left:11px;color:#00ff00">EUR A0-FX - 5 min</div>
<div class="a hd" style="left:106px;color:#00ff00">FX</div>
<div class="a hd" style="left:125px;color:#ff0000">L=1.2935</div>
<div class="a hd" style="left:176.6px;color:#ff0000">-0.0133</div>
<div class="a hd" style="left:219.8px;color:#ff0000">-1.02%</div>
<div class="a hd" style="left:260.3px;color:#ffffff">B=1.2935</div>
<div class="a hd" style="left:312.3px;color:#ffffff">A=1.2937</div>
<div class="a hd" style="left:365.8px;color:#ff0000">O=1.3066</div>
<div class="a hd" style="left:418px;color:#ffffff">Hi=1.3080</div>
<div class="a hd" style="left:472px;color:#ffffff">Lo=1.2912</div>
<div class="a hd" style="left:529px;color:#ffffff">V=0</div>
<svg class="a" style="left:640px;top:360px" width="300" height="226" viewBox="640 360 300 226">
<defs><path id="arc" d="M730.4 470.1 A61 61 0 1 1 850.6 470.1"/></defs>
<g opacity="0.35">
 <polygon points="881.5,459.5 873.4,463.8 881.0,469.0 872.5,472.5 879.5,478.4 870.7,481.0 877.0,487.6 868.0,489.2 873.6,496.5 864.5,497.2 869.3,505.0 860.1,504.7 864.1,513.0 855.0,511.7 858.1,520.4 849.2,518.2 851.4,527.1 842.7,524.0 844.0,533.1 835.7,529.1 836.0,538.3 828.2,533.5 827.5,542.6 820.2,537.0 818.6,546.0 812.0,539.7 809.4,548.5 803.5,541.5 800.0,550.0 794.8,542.4 790.5,550.5 786.2,542.4 781.0,550.0 777.5,541.5 771.6,548.5 769.0,539.7 762.4,546.0 760.8,537.0 753.5,542.6 752.8,533.5 745.0,538.3 745.3,529.1 737.0,533.1 738.3,524.0 729.6,527.1 731.8,518.2 722.9,520.4 726.0,511.7 716.9,513.0 720.9,504.7 711.7,505.0 716.5,497.2 707.4,496.5 713.0,489.2 704.0,487.6 710.3,481.0 701.5,478.4 708.5,472.5 700.0,469.0 707.6,463.8 699.5,459.5 707.6,455.2 700.0,450.0 708.5,446.5 701.5,440.6 710.3,438.0 704.0,431.4 713.0,429.8 707.4,422.5 716.5,421.8 711.7,414.0 720.9,414.3 716.9,406.0 726.0,407.3 722.9,398.6 731.8,400.8 729.6,391.9 738.3,395.0 737.0,385.9 745.3,389.9 745.0,380.7 752.8,385.5 753.5,376.4 760.8,382.0 762.4,373.0 769.0,379.3 771.6,370.5 777.5,377.5 781.0,369.0 786.2,376.6 790.5,368.5 794.8,376.6 800.0,369.0 803.5,377.5 809.4,370.5 812.0,379.3 818.6,373.0 820.2,382.0 827.5,376.4 828.2,385.5 836.0,380.7 835.7,389.9 844.0,385.9 842.7,395.0 851.4,391.9 849.2,400.8 858.1,398.6 855.0,407.3 864.1,406.0 860.1,414.3 869.3,414.0 864.5,421.8 873.6,422.5 868.0,429.8 877.0,431.4 870.7,438.0 879.5,440.6 872.5,446.5 881.0,450.0 873.4,455.2" fill="#c4c4c4"/>
 <circle cx="790.5" cy="459.5" r="78" fill="#8a3030"/>
 <circle cx="790.5" cy="459.5" r="76" fill="none" stroke="#b8b8b8" stroke-width="1.2"/>
 <circle cx="790.5" cy="459.5" r="55" fill="#6a1c1c" stroke="#c8c8c8" stroke-width="2.2"/>
 <path d="M718 520 L860 395 L875 440 L760 535 Z" fill="#a04040" opacity="0.35"/>
 <text font-family="Liberation Sans" font-weight="bold" font-size="17" fill="#e8e8e8" stroke="#e8e8e8" stroke-width="0.5" letter-spacing="0"><textPath href="#arc" textLength="205" lengthAdjust="spacingAndGlyphs">WWW.TRADING-SOFTWARE.ORG</textPath></text>
 <circle cx="728" cy="479.5" r="2.3" fill="#e0e0e0"/><circle cx="853" cy="479.5" r="2.3" fill="#e0e0e0"/>
 <text x="0" y="0" font-family="Liberation Sans" font-weight="bold" font-size="56" fill="#f4f4f4" stroke="#f4f4f4" stroke-width="2.2" transform="translate(745 472.5) scale(0.775 1)">100</text>
 <text x="0" y="0" font-family="Liberation Sans" font-weight="bold" font-size="32" fill="#f4f4f4" stroke="#f4f4f4" stroke-width="1.2" transform="translate(818 472.5) scale(0.74 1)">%</text>
 <!-- ribbon tails -->
 <path d="M700 509 L659 525 L676 537 L669 561 Q715 546 765 539 L765 520 Z" fill="#8a2a2a"/>
 <path d="M881 509 L922 525 L905 538 L913 560 Q866 546 816 539 L816 520 Z" fill="#8a2a2a"/>
 <!-- main band -->
 <path d="M700 503 Q700 497 708 495 Q790 478 873 495 Q881 497 881 503 L881 535 Q790 508 705 537 Z" fill="#b43c3c"/>
 <path d="M705 538 Q701 528 712 524 Q730 518 748 517 L750 529 Q730 533 712 540 Z" fill="#4a1010"/>
 <path d="M876 538 Q880 528 869 524 Q851 518 833 517 L831 529 Q851 533 869 540 Z" fill="#4a1010"/>
 <text x="0" y="0" font-family="Liberation Sans" font-weight="bold" font-size="24.5" fill="#f0f0f0" stroke="#f0f0f0" stroke-width="1.4" transform="translate(750 510) scale(0.63 1)">CRACKED</text>
</g>
</svg>

<svg class="a" style="left:8px;top:587px" width="936" height="55" viewBox="8 587 936 55" shape-rendering="crispEdges">
<!-- scrollbar -->
<rect x="8" y="587" width="935" height="18" fill="#e9e9e9"/>
<rect x="10" y="587" width="933" height="1" fill="#ffffff"/>
<rect x="8" y="587" width="1" height="18" fill="#8c8c8c"/>
<rect x="9" y="587" width="1" height="18" fill="#b4b4b4"/>
<rect x="10" y="588" width="17" height="16" fill="#ebebeb"/>
<path d="M14 595.5L18 591.5V599.5Z" fill="#5e5e5e" shape-rendering="auto"/>
<path d="M932 591.5L936 595.5L932 599.5Z" fill="#5e5e5e" shape-rendering="auto"/>
<rect x="8" y="604" width="935" height="2" fill="#ffffff"/>
<!-- tab strip -->
<rect x="8" y="606" width="935" height="1" fill="#000"/>
<rect x="8" y="607" width="935" height="15" fill="#efefef"/>
<rect x="8" y="622" width="935" height="1" fill="#7c7c7c"/>
<rect x="8" y="623" width="935" height="1" fill="#ffffff"/>
<!-- nav buttons -->
<g>
<rect x="8" y="607" width="16" height="15" fill="#e4e4e4"/><rect x="8" y="607" width="16" height="1" fill="#fff"/><rect x="23" y="607" width="1" height="15" fill="#6e6e6e"/>
<rect x="25" y="607" width="16" height="15" fill="#e4e4e4"/><rect x="25" y="607" width="16" height="1" fill="#fff"/><rect x="25" y="607" width="1" height="15" fill="#fff"/><rect x="40" y="607" width="1" height="15" fill="#6e6e6e"/>
<rect x="42" y="607" width="16" height="15" fill="#e4e4e4"/><rect x="42" y="607" width="16" height="1" fill="#fff"/><rect x="42" y="607" width="1" height="15" fill="#fff"/><rect x="57" y="607" width="1" height="15" fill="#6e6e6e"/>
<rect x="59" y="607" width="16" height="15" fill="#e4e4e4"/><rect x="59" y="607" width="16" height="1" fill="#fff"/><rect x="59" y="607" width="1" height="15" fill="#fff"/><rect x="74" y="607" width="1" height="15" fill="#6e6e6e"/>
<rect x="8" y="621" width="67" height="1" fill="#9a9a9a"/>
</g>
<g fill="#5e5e5e" shape-rendering="auto">
<rect x="12" y="611" width="1.3" height="7"/><path d="M13.5 614.5L18 611V618Z"/>
<path d="M30 614.5L34 611V618Z"/>
<path d="M48 611L52.5 614.5L48 618Z"/>
<path d="M64 611L68.5 614.5L64 618Z"/><rect x="69" y="611" width="1.3" height="7"/>
</g>
<!-- EUR tab -->
<path d="M76.5 606.5L82.5 622.5H124.5L130.5 606.5Z" fill="#fff" stroke="#000" stroke-width="1" shape-rendering="auto"/>
<rect x="77" y="606" width="53" height="1" fill="#fff"/>
<!-- status bar -->
<rect x="8" y="624" width="935" height="18" fill="#f0eded"/>
<g shape-rendering="crispEdges">
<rect x="939" y="630" width="2" height="2" fill="#e8462a"/><rect x="938" y="634" width="2" height="2" fill="#e0206a"/><rect x="940" y="636" width="2" height="2" fill="#e0206a"/>
<rect x="938" y="638" width="1" height="1" fill="#9a9a9a"/><rect x="935" y="638" width="1" height="1" fill="#9a9a9a"/><rect x="932" y="638" width="1" height="1" fill="#9a9a9a"/>
<rect x="935" y="635" width="1" height="1" fill="#9a9a9a"/><rect x="939" y="635" width="1" height="1" fill="#9a9a9a"/>
</g>
</svg>
<div class="a" style="left:909px;top:588px;width:15px;height:15px;border:1px solid #8f8f8f;border-radius:2px;background:linear-gradient(#f6f6f6,#e4e4e4 50%,#d2d2d2)"></div>

<!-- status -->
<div class="a ss" style="left:357px"></div>
<div class="a ss" style="left:433px"></div>
<div class="a ss" style="left:501px"></div>
<div class="a ss" style="left:591px"></div>
<div class="a ss" style="left:667px"></div>
<div class="a ss" style="left:745px"></div>
<div class="a ss" style="left:795px"></div>
<div class="a ss" style="left:865px"></div>
<div class="a" style="left:30.0px;top:12px;font-size:11.5px;font-weight:normal;font-style:normal;color:#000;letter-spacing:-0.039px;white-space:nowrap">TradeStation 9.0 - Desktop #2 - EUR - [Chart Analysis - EUR A0-FX 5 min [FX] EURO]</div>
<div class="a" style="left:38.0px;top:34px;font-size:11.5px;font-weight:normal;font-style:normal;color:#000;letter-spacing:-0.145px;white-space:nowrap">File</div>
<div class="a" style="left:70.0px;top:34px;font-size:11.5px;font-weight:normal;font-style:normal;color:#000;letter-spacing:-0.207px;white-space:nowrap">Edit</div>
<div class="a" style="left:104.0px;top:34px;font-size:11.5px;font-weight:normal;font-style:normal;color:#000;letter-spacing:-0.271px;white-space:nowrap">View</div>
<div class="a" style="left:142.0px;top:34px;font-size:11.5px;font-weight:normal;font-style:normal;color:#000;letter-spacing:0.007px;white-space:nowrap">Insert</div>
<div class="a" style="left:186.5px;top:34px;font-size:11.5px;font-weight:normal;font-style:normal;color:#000;letter-spacing:-0.065px;white-space:nowrap">Format</div>
<div class="a" style="left:238.0px;top:34px;font-size:11.5px;font-weight:normal;font-style:normal;color:#000;letter-spacing:0.319px;white-space:nowrap">Drawing</div>
<div class="a" style="left:296.0px;top:34px;font-size:11.5px;font-weight:normal;font-style:normal;color:#000;letter-spacing:0.481px;white-space:nowrap">Window</div>
<div class="a" style="left:354.5px;top:34px;font-size:11.5px;font-weight:normal;font-style:normal;color:#000;letter-spacing:0.181px;white-space:nowrap">Help</div>
<div class="a" style="left:10.4px;top:628px;font-size:11.5px;font-weight:normal;font-style:normal;color:#000;letter-spacing:-0.190px;white-space:nowrap">For Help, press F1</div>
<div class="a" style="left:318.5px;top:628px;font-size:11.5px;font-weight:normal;font-style:normal;color:#000;letter-spacing:0.209px;white-space:nowrap">Acct:</div>
<div class="a" style="left:362.0px;top:628px;font-size:11.5px;font-weight:normal;font-style:normal;color:#000;letter-spacing:-0.210px;white-space:nowrap">Open Psns:</div>
<div class="a" style="left:437.8px;top:628px;font-size:11.5px;font-weight:normal;font-style:normal;color:#000;letter-spacing:0.005px;white-space:nowrap">DT BP: N/A</div>
<div class="a" style="left:506.0px;top:628px;font-size:11.5px;font-weight:normal;font-style:normal;color:#000;letter-spacing:0.236px;white-space:nowrap">Purch Pwr: N/A</div>
<div class="a" style="left:596.0px;top:628px;font-size:11.5px;font-weight:normal;font-style:normal;color:#000;letter-spacing:0.035px;white-space:nowrap">Closed P/L:</div>
<div class="a" style="left:673.0px;top:628px;font-size:11.5px;font-weight:normal;font-style:normal;color:#000;letter-spacing:0.045px;white-space:nowrap">Closed P/L:</div>
<div class="a" style="left:750.0px;top:628px;font-size:11.5px;font-weight:normal;font-style:normal;color:#000;letter-spacing:-0.602px;white-space:nowrap">RT TE:</div>
<div class="a" style="left:800.3px;top:628px;font-size:11.5px;font-weight:normal;font-style:normal;color:#000;letter-spacing:0.089px;white-space:nowrap">Open P/L:</div>
<div class="a" style="left:870.4px;top:628px;font-size:11.5px;font-weight:normal;font-style:normal;color:#168a16;letter-spacing:-0.871px;white-space:nowrap">ORDER BAR</div>
<div class="a" style="left:325.0px;top:60px;font-size:11.5px;font-weight:normal;font-style:normal;color:#6d6d6d;letter-spacing:-0.442px;white-space:nowrap">Type a symbol/command</div>
<div class="a" style="left:656.2px;top:60px;font-size:11.5px;font-weight:normal;font-style:normal;color:#6d6d6d;letter-spacing:-0.505px;white-space:nowrap">Insert an Analysis Group</div>
<div class="a" style="left:516.6px;top:12px;font-size:10.5px;font-weight:bold;font-style:italic;color:#7c8a9d;letter-spacing:0.264px;white-space:nowrap">WWW.TRADING-SOFTWARE-CATALOG.COM</div>
<div class="a" style="-webkit-text-stroke:0.3px #000;left:91.5px;top:608px;font-size:12px;font-weight:normal;font-style:normal;color:#000;letter-spacing:-0.300px;white-space:nowrap">EUR</div>
</body></html>
